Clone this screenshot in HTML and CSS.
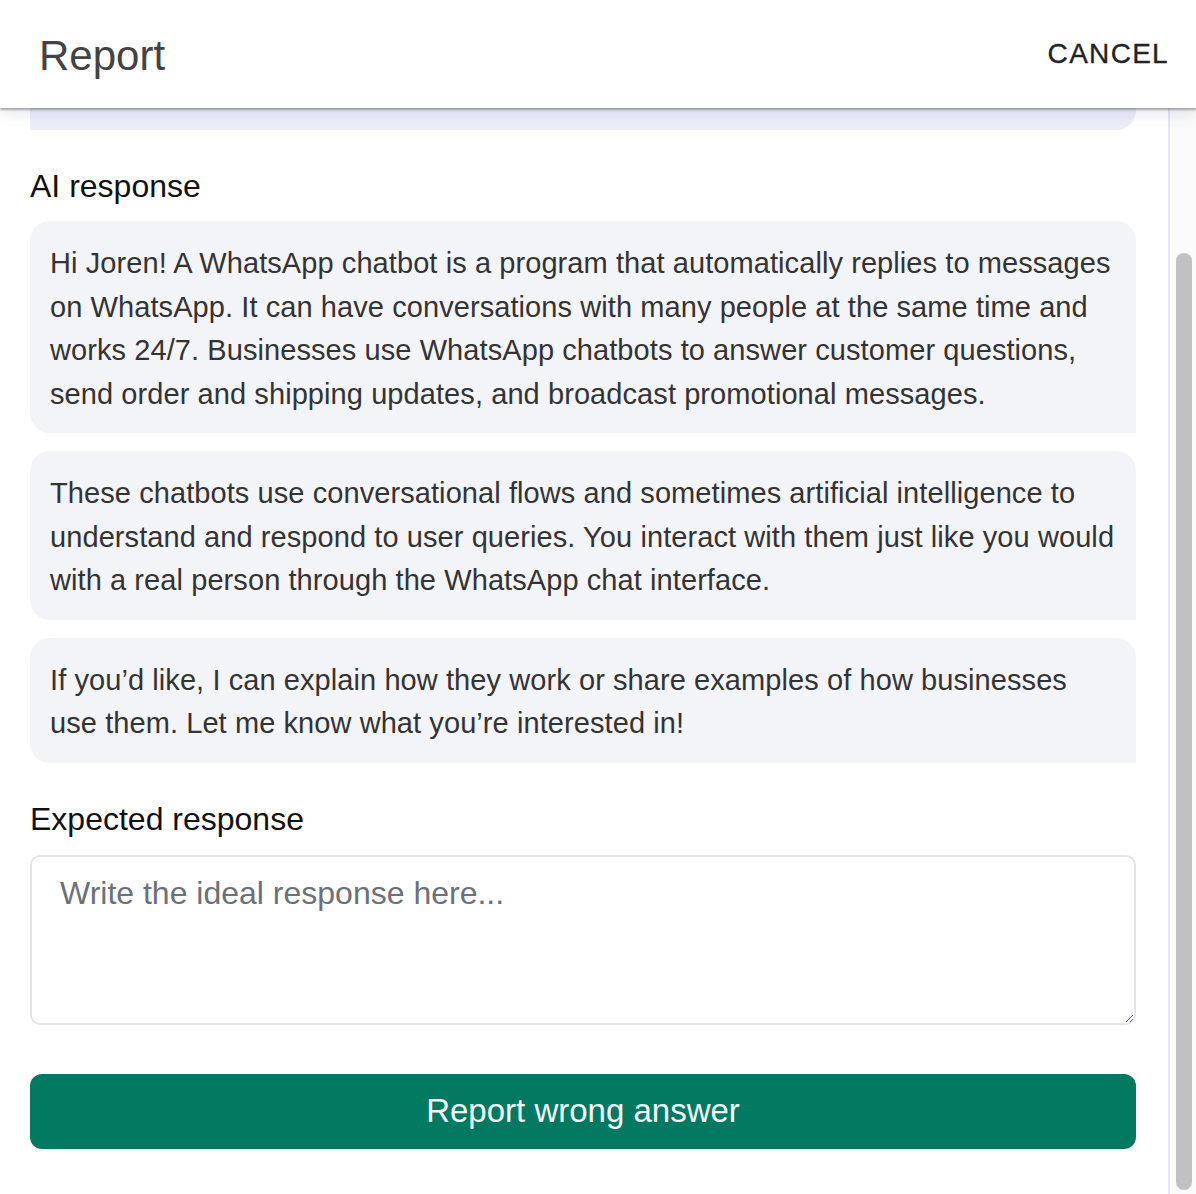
FILE: index.html
```html
<!DOCTYPE html>
<html lang="en">
<head>
<meta charset="utf-8">
<title>Report</title>
<link rel="stylesheet" href="styles.css">
</head>
<body>
<header class="header">
  <h1 class="title">Report</h1>
  <button class="cancel" type="button">CANCEL</button>
</header>
<div class="frame">
  <main class="content">
    <div class="user-bubble"></div>
    <h2 class="label label-first">AI response</h2>
    <div class="bubble">Hi Joren! A WhatsApp chatbot is a program that automatically replies to messages on WhatsApp. It can have conversations with many people at the same time and works 24/7. Businesses use WhatsApp chatbots to answer customer questions, send order and shipping updates, and broadcast promotional messages.</div>
    <div class="bubble">These chatbots use conversational flows and sometimes artificial intelligence to understand and respond to user queries. You interact with them just like you would with a real person through the WhatsApp chat interface.</div>
    <div class="bubble">If you’d like, I can explain how they work or share examples of how businesses use them. Let me know what you’re interested in!</div>
    <h2 class="label label-second">Expected response</h2>
    <textarea class="expected" placeholder="Write the ideal response here..."></textarea>
    <button class="submit" type="button">Report wrong answer</button>
  </main>
  <div class="scrollbar"><div class="thumb"></div></div>
</div>
</body>
</html>
```

FILE: styles.css
```css
* { box-sizing: border-box; }
html, body { margin: 0; padding: 0; }
body {
  height: 1194px;
  overflow: hidden;
  background: #ffffff;
  font-family: "Liberation Sans", Arial, sans-serif;
  color: #333333;
}
.header {
  position: relative;
  z-index: 2;
  height: 108px;
  display: flex;
  justify-content: space-between;
  align-items: flex-start;
  padding: 0 27px 0 39px;
  background: #ffffff;
  box-shadow: 0 2px 2px rgba(0, 0, 0, 0.3), 0 6px 14px rgba(60, 70, 120, 0.12);
}
.title {
  margin: 32px 0 0;
  font-size: 42px;
  line-height: 48px;
  font-weight: 400;
  color: #434343;
}
.cancel {
  margin: 37px 0 0;
  padding: 0;
  border: 0;
  background: none;
  font-family: inherit;
  font-size: 28px;
  line-height: 34px;
  letter-spacing: 1.3px;
  color: #222222;
  -webkit-text-stroke: 0.3px #222222;
}
.frame {
  display: flex;
  height: 1086px;
}
.content {
  flex: 1;
  padding: 0 32px 0 30px;
  border-right: 2px solid #e4e6f3;
}
.user-bubble {
  height: 22px;
  background: #eceefa;
  border-radius: 0 0 20px 0;
}
.label {
  margin: 0;
  font-size: 32px;
  line-height: 36px;
  font-weight: 400;
  color: #111111;
}
.label-first { margin: 38px 0 17px; }
.label-second { margin: 38px 0 18px; }
.bubble {
  background: #f3f4f8;
  border-radius: 20px 20px 0 20px;
  padding: 21px 20px 17px 20px;
  font-size: 29px;
  line-height: 43.5px;
  letter-spacing: 0.08px;
  color: #333333;
  margin-bottom: 18px;
}
.expected {
  display: block;
  width: 100%;
  height: 170px;
  border: 2px solid #e2e4f0;
  border-radius: 10px;
  padding: 15px 28px;
  font-family: inherit;
  font-size: 32px;
  line-height: 43px;
  color: #333333;
  background: #ffffff;
  outline: none;
}
.expected::placeholder { color: #6c7078; }
.submit {
  display: block;
  width: 100%;
  height: 75px;
  margin-top: 49px;
  border: 0;
  border-radius: 12px;
  background: #027a62;
  color: #f6f6fa;
  font-family: inherit;
  font-size: 33px;
}
.scrollbar {
  width: 26px;
  background: #fafafa;
  padding: 145px 4px 0 6px;
}
.thumb {
  width: 16px;
  height: 937px;
  border-radius: 8px;
  background: #c1c1c2;
}
```
